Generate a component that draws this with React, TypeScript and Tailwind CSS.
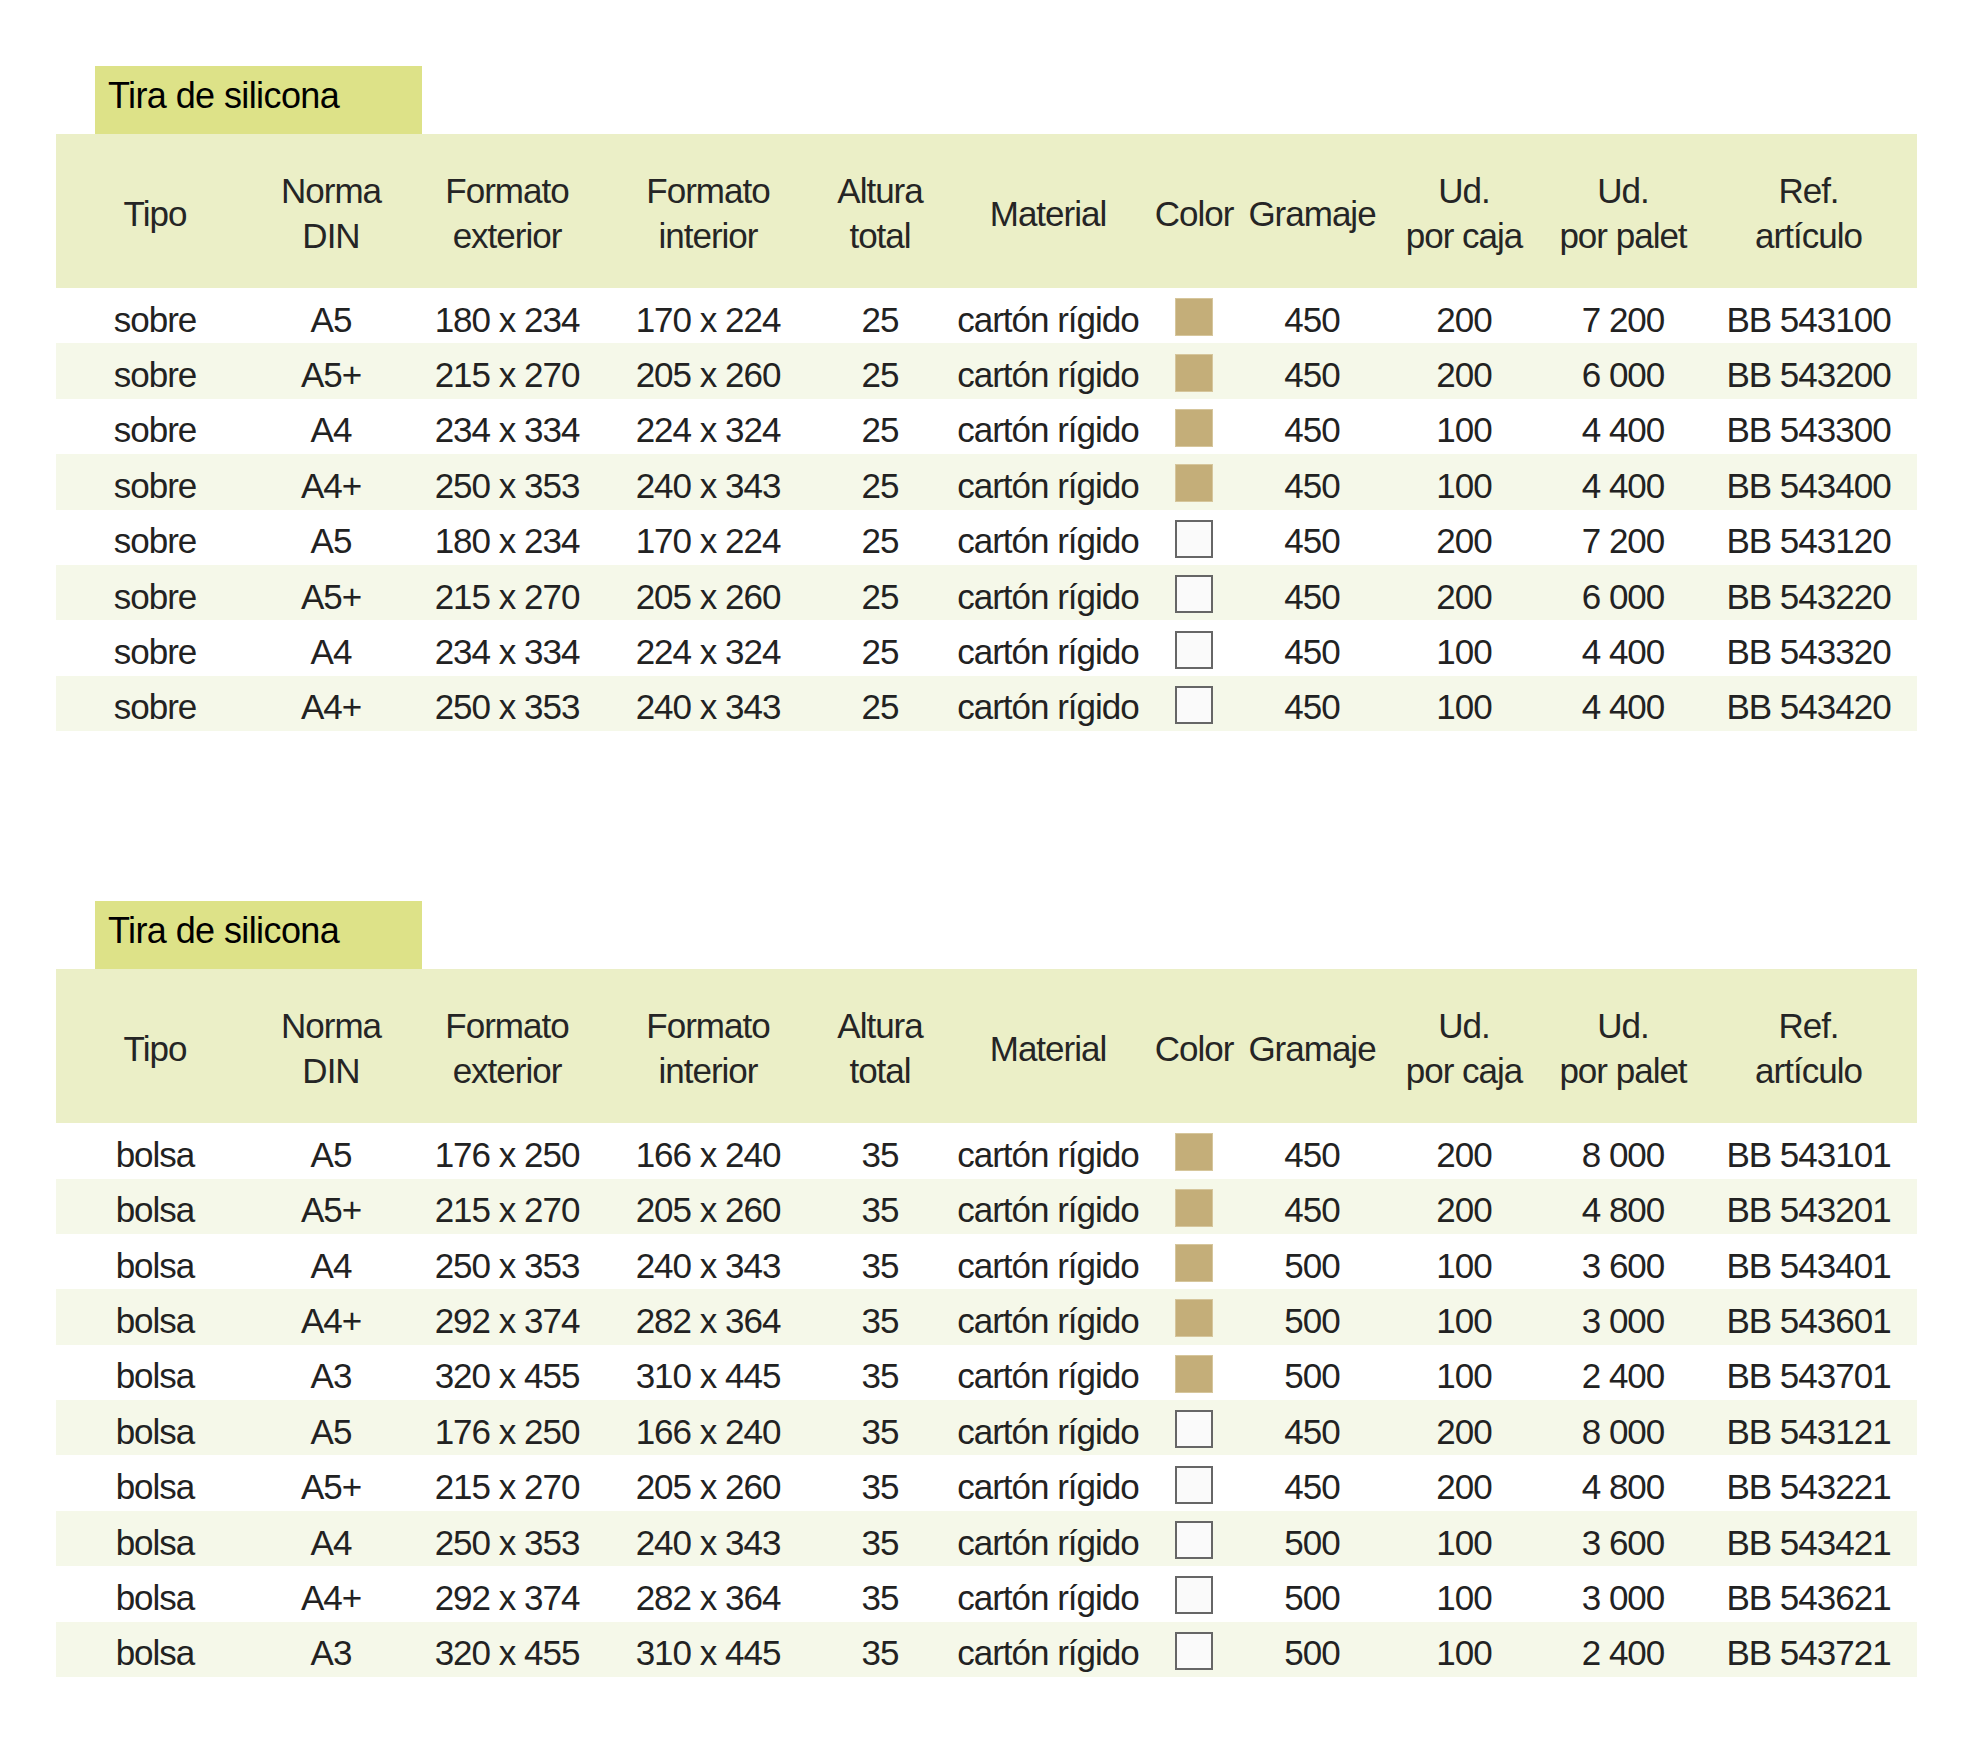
import React from 'react';

type Row = {
  tipo: string;
  din: string;
  ext: string;
  int: string;
  alt: string;
  tan: boolean;
  gram: string;
  caja: string;
  palet: string;
  ref: string;
};

const sobres: Row[] = [
  { tipo: 'sobre', din: 'A5', ext: '180 x 234', int: '170 x 224', alt: '25', tan: true, gram: '450', caja: '200', palet: '7 200', ref: 'BB 543100' },
  { tipo: 'sobre', din: 'A5+', ext: '215 x 270', int: '205 x 260', alt: '25', tan: true, gram: '450', caja: '200', palet: '6 000', ref: 'BB 543200' },
  { tipo: 'sobre', din: 'A4', ext: '234 x 334', int: '224 x 324', alt: '25', tan: true, gram: '450', caja: '100', palet: '4 400', ref: 'BB 543300' },
  { tipo: 'sobre', din: 'A4+', ext: '250 x 353', int: '240 x 343', alt: '25', tan: true, gram: '450', caja: '100', palet: '4 400', ref: 'BB 543400' },
  { tipo: 'sobre', din: 'A5', ext: '180 x 234', int: '170 x 224', alt: '25', tan: false, gram: '450', caja: '200', palet: '7 200', ref: 'BB 543120' },
  { tipo: 'sobre', din: 'A5+', ext: '215 x 270', int: '205 x 260', alt: '25', tan: false, gram: '450', caja: '200', palet: '6 000', ref: 'BB 543220' },
  { tipo: 'sobre', din: 'A4', ext: '234 x 334', int: '224 x 324', alt: '25', tan: false, gram: '450', caja: '100', palet: '4 400', ref: 'BB 543320' },
  { tipo: 'sobre', din: 'A4+', ext: '250 x 353', int: '240 x 343', alt: '25', tan: false, gram: '450', caja: '100', palet: '4 400', ref: 'BB 543420' },
];

const bolsas: Row[] = [
  { tipo: 'bolsa', din: 'A5', ext: '176 x 250', int: '166 x 240', alt: '35', tan: true, gram: '450', caja: '200', palet: '8 000', ref: 'BB 543101' },
  { tipo: 'bolsa', din: 'A5+', ext: '215 x 270', int: '205 x 260', alt: '35', tan: true, gram: '450', caja: '200', palet: '4 800', ref: 'BB 543201' },
  { tipo: 'bolsa', din: 'A4', ext: '250 x 353', int: '240 x 343', alt: '35', tan: true, gram: '500', caja: '100', palet: '3 600', ref: 'BB 543401' },
  { tipo: 'bolsa', din: 'A4+', ext: '292 x 374', int: '282 x 364', alt: '35', tan: true, gram: '500', caja: '100', palet: '3 000', ref: 'BB 543601' },
  { tipo: 'bolsa', din: 'A3', ext: '320 x 455', int: '310 x 445', alt: '35', tan: true, gram: '500', caja: '100', palet: '2 400', ref: 'BB 543701' },
  { tipo: 'bolsa', din: 'A5', ext: '176 x 250', int: '166 x 240', alt: '35', tan: false, gram: '450', caja: '200', palet: '8 000', ref: 'BB 543121' },
  { tipo: 'bolsa', din: 'A5+', ext: '215 x 270', int: '205 x 260', alt: '35', tan: false, gram: '450', caja: '200', palet: '4 800', ref: 'BB 543221' },
  { tipo: 'bolsa', din: 'A4', ext: '250 x 353', int: '240 x 343', alt: '35', tan: false, gram: '500', caja: '100', palet: '3 600', ref: 'BB 543421' },
  { tipo: 'bolsa', din: 'A4+', ext: '292 x 374', int: '282 x 364', alt: '35', tan: false, gram: '500', caja: '100', palet: '3 000', ref: 'BB 543621' },
  { tipo: 'bolsa', din: 'A3', ext: '320 x 455', int: '310 x 445', alt: '35', tan: false, gram: '500', caja: '100', palet: '2 400', ref: 'BB 543721' },
];

const headers = [
  ['Tipo'],
  ['Norma', 'DIN'],
  ['Formato', 'exterior'],
  ['Formato', 'interior'],
  ['Altura', 'total'],
  ['Material'],
  ['Color'],
  ['Gramaje'],
  ['Ud.', 'por caja'],
  ['Ud.', 'por palet'],
  ['Ref.', 'artículo'],
];

const grid =
  'grid grid-cols-[198px_154px_198px_204px_140px_196px_96px_140px_164px_154px_217px]';

function Cell({ children }: { children: React.ReactNode }) {
  return (
    <div className="flex items-center justify-center pt-[8px] whitespace-nowrap leading-[40px]">
      {children}
    </div>
  );
}

function Table({ rows }: { rows: Row[] }) {
  return (
    <div>
      {/* Title tab */}
      <div className="ml-[39px] w-[327px] h-[68px] bg-[#dde288] pl-[13px] pt-[12px] text-[36px] leading-none tracking-[-0.6px] text-black">
        Tira de silicona
      </div>

      {/* Header */}
      <div className={`${grid} h-[154px] bg-[#ebefc7] text-[#252525]`}>
        {headers.map((lines, i) => (
          <div key={i} className="flex flex-col items-center justify-center pt-[4px] whitespace-nowrap leading-[45px]">
            {lines.map((l) => (
              <span key={l}>{l}</span>
            ))}
          </div>
        ))}
      </div>

      {/* Rows */}
      {rows.map((r, i) => (
        <div
          key={r.ref}
          className={`${grid} h-[55.4px] text-[#222222] ${i % 2 === 1 ? 'bg-[#f5f8e9]' : 'bg-white'}`}
        >
          <Cell>{r.tipo}</Cell>
          <Cell>{r.din}</Cell>
          <Cell>{r.ext}</Cell>
          <Cell>{r.int}</Cell>
          <Cell>{r.alt}</Cell>
          <Cell>cartón rígido</Cell>
          <div className="flex items-center justify-center pt-[8px]">
            {r.tan ? (
              <div className="w-[38px] h-[38px] mb-[5px] bg-[#c4ae79] border border-[#d6c69c]" />
            ) : (
              <div className="w-[38px] h-[38px] mb-[5px] bg-[#fafafa] border-2 border-[#666666]" />
            )}
          </div>
          <Cell>{r.gram}</Cell>
          <Cell>{r.caja}</Cell>
          <Cell>{r.palet}</Cell>
          <Cell>{r.ref}</Cell>
        </div>
      ))}
    </div>
  );
}

export default function App() {
  return (
    <div className="min-h-[1743px] w-[1987px] bg-white pt-[66px] pl-[56px] font-['Liberation_Sans',Arial,sans-serif] text-[35px] tracking-[-1px]">
      <div className="w-[1861px]">
        <Table rows={sobres} />
        <div className="mt-[170px]">
          <Table rows={bolsas} />
        </div>
      </div>
    </div>
  );
}
